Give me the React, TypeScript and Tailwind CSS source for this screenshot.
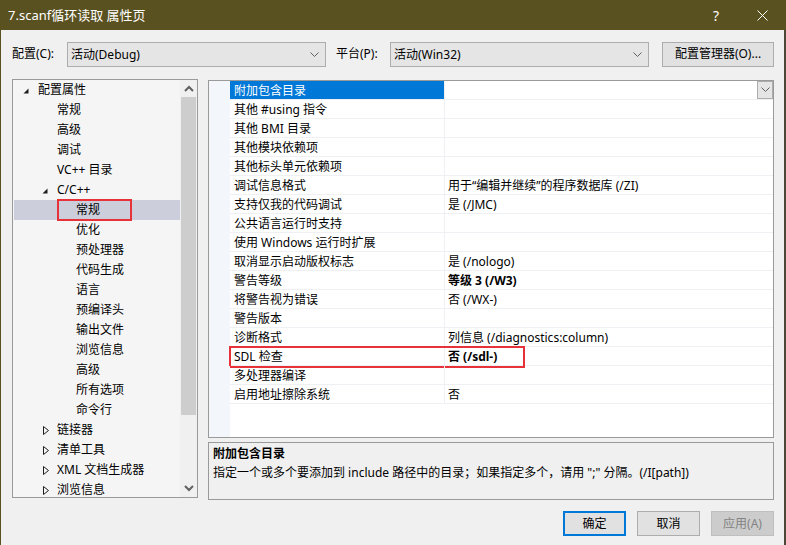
import React from "react";

const FONT = "font-['Noto_Sans','Noto_Sans_CJK_SC',sans-serif]";

function Chevron({ up = false }: { up?: boolean }) {
  return (
    <svg width="9" height="6" viewBox="0 0 9 6">
      <path
        d={up ? "M0.5 5.5 L4.5 1.5 L8.5 5.5" : "M0.5 0.5 L4.5 4.5 L8.5 0.5"}
        fill="none"
        stroke="#606060"
        strokeWidth="1"
      />
    </svg>
  );
}

function ScrollChevron({ up = false }: { up?: boolean }) {
  return (
    <svg width="10" height="7" viewBox="0 0 10 7">
      <path
        d={up ? "M1 6 L5 2 L9 6" : "M1 1 L5 5 L9 1"}
        fill="none"
        stroke="#606060"
        strokeWidth="2"
      />
    </svg>
  );
}

function Expanded() {
  return (
    <svg width="6" height="6" viewBox="0 0 6 6">
      <path d="M5.5 0.5 L5.5 5.5 L0.5 5.5 Z" fill="#1e1e1e" />
    </svg>
  );
}

function Collapsed() {
  return (
    <svg width="6" height="9" viewBox="0 0 6 9">
      <path d="M0.5 0.5 L5.5 4.5 L0.5 8.5 Z" fill="none" stroke="#1e1e1e" strokeWidth="1" />
    </svg>
  );
}

type TreeItem = { text: string; level: 0 | 1 | 2; arrow?: "open" | "closed"; selected?: boolean };

const tree: TreeItem[] = [
  { text: "配置属性", level: 0, arrow: "open" },
  { text: "常规", level: 1 },
  { text: "高级", level: 1 },
  { text: "调试", level: 1 },
  { text: "VC++ 目录", level: 1 },
  { text: "C/C++", level: 1, arrow: "open" },
  { text: "常规", level: 2, selected: true },
  { text: "优化", level: 2 },
  { text: "预处理器", level: 2 },
  { text: "代码生成", level: 2 },
  { text: "语言", level: 2 },
  { text: "预编译头", level: 2 },
  { text: "输出文件", level: 2 },
  { text: "浏览信息", level: 2 },
  { text: "高级", level: 2 },
  { text: "所有选项", level: 2 },
  { text: "命令行", level: 2 },
  { text: "链接器", level: 1, arrow: "closed" },
  { text: "清单工具", level: 1, arrow: "closed" },
  { text: "XML 文档生成器", level: 1, arrow: "closed" },
  { text: "浏览信息", level: 1, arrow: "closed" },
];

const props: { name: string; value: string; bold?: boolean }[] = [
  { name: "附加包含目录", value: "" },
  { name: "其他 #using 指令", value: "" },
  { name: "其他 BMI 目录", value: "" },
  { name: "其他模块依赖项", value: "" },
  { name: "其他标头单元依赖项", value: "" },
  { name: "调试信息格式", value: "用于“编辑并继续”的程序数据库 (/ZI)" },
  { name: "支持仅我的代码调试", value: "是 (/JMC)" },
  { name: "公共语言运行时支持", value: "" },
  { name: "使用 Windows 运行时扩展", value: "" },
  { name: "取消显示启动版权标志", value: "是 (/nologo)" },
  { name: "警告等级", value: "等级 3 (/W3)", bold: true },
  { name: "将警告视为错误", value: "否 (/WX-)" },
  { name: "警告版本", value: "" },
  { name: "诊断格式", value: "列信息 (/diagnostics:column)" },
  { name: "SDL 检查", value: "否 (/sdl-)", bold: true },
  { name: "多处理器编译", value: "" },
  { name: "启用地址擦除系统", value: "否" },
];

function TreeRow({ item }: { item: TreeItem }) {
  let pad = "pl-[8px]";
  if (item.level === 1) pad = item.arrow ? "pl-[27px]" : "pl-[43px]";
  if (item.level === 2) pad = "pl-[62px]";
  return (
    <div
      className={`relative h-[20px] flex items-center ${pad} ${item.selected ? "bg-[#cccedb]" : ""}`}
    >
      {(item.level === 0 || item.arrow) && (
        <div className="w-[16px] flex items-center">
          {item.arrow === "open" ? (
            <span className="ml-[1px] mt-[1px] flex">
              <Expanded />
            </span>
          ) : (
            <span className="ml-[2px] flex">
              <Collapsed />
            </span>
          )}
        </div>
      )}
      <span className="whitespace-nowrap leading-[20px]">{item.text}</span>
      {item.selected && (
        <div className="absolute left-[43px] top-[-1px] w-[75px] h-[22px] border-2 border-[#e8323a]" />
      )}
    </div>
  );
}

export default function App() {
  return (
    <div className={`w-[786px] h-[545px] bg-[#f0f0f0] text-[12px] text-black ${FONT} flex flex-col overflow-hidden`}>
      {/* Title bar */}
      <div className="h-[30px] bg-[#5a5121] flex items-center text-white shrink-0">
        <span className="pl-[8px] text-[13px] leading-[30px]">7.scanf循环读取 属性页</span>
        <div className="ml-auto w-[46px] h-[30px] flex items-center justify-center text-[14px]">?</div>
        <div className="w-[46px] h-[30px] flex items-center justify-center mr-[1px]">
          <svg width="11" height="11" viewBox="0 0 11 11">
            <path d="M0.5 0.5 L10.5 10.5 M10.5 0.5 L0.5 10.5" stroke="#ffffff" strokeWidth="1" />
          </svg>
        </div>
      </div>

      {/* Body */}
      <div className="flex-1 flex flex-col border-l border-l-[#5a5121] border-r-2 border-r-[#4b4636] pl-[11px] pr-[10px]">
        {/* Config row */}
        <div className="mt-[11px] h-[26px] flex items-center">
          <span className="w-[55px] whitespace-nowrap">配置(C):</span>
          <div className="w-[259px] h-[25px] mt-[1px] bg-[#e5e5e5] border border-[#adadad] flex items-center pl-[3px] pr-[6px]">
            <span>活动(Debug)</span>
            <span className="ml-auto flex">
              <Chevron />
            </span>
          </div>
          <span className="ml-[10px] w-[54px] whitespace-nowrap">平台(P):</span>
          <div className="w-[259px] h-[25px] mt-[1px] bg-[#e5e5e5] border border-[#adadad] flex items-center pl-[3px] pr-[6px]">
            <span>活动(Win32)</span>
            <span className="ml-auto flex">
              <Chevron />
            </span>
          </div>
          <div className="ml-[13px] w-[112px] h-[25px] bg-[#e1e1e1] border border-[#adadad] flex items-center justify-center">
            配置管理器(O)...
          </div>
        </div>

        {/* Main */}
        <div className="mt-[12px] flex">
          {/* Tree */}
          <div className="w-[186px] h-[419px] border border-[#9a9a9a] bg-[#f5f5f5] flex">
            <div className="w-[167px] pl-px overflow-hidden">
              {tree.map((t, i) => (
                <TreeRow key={i} item={t} />
              ))}
            </div>
            <div className="w-[17px] bg-[#f0f0f0] flex flex-col items-center">
              <div className="h-[17px] flex items-center justify-center">
                <ScrollChevron up />
              </div>
              <div className="w-[15px] h-[318px] bg-[#cdcdcd]" />
              <div className="flex-1" />
              <div className="h-[17px] flex items-center justify-center">
                <ScrollChevron />
              </div>
            </div>
          </div>

          {/* Right column */}
          <div className="ml-[10px] w-[566px] flex flex-col">
            <div className="mt-px h-[358px] border border-[#9a9a9a] bg-white flex flex-col">
              {props.map((p, i) => (
                <div key={i} className="relative h-[19px] flex">
                  <div className="w-[21px] bg-[#f3f6fb]" />
                  <div
                    className={`w-[215px] border-r border-b border-[#eef0f4] pl-[4px] leading-[20px] whitespace-nowrap ${
                      i === 0 ? "bg-[#0078d7] text-white" : ""
                    }`}
                  >
                    {p.name}
                  </div>
                  <div className="flex-1 flex border-b border-[#eef0f4] pl-[3px] leading-[20px] whitespace-nowrap">
                    <span className={p.bold ? "font-bold" : ""}>{p.value}</span>
                    {i === 0 && (
                      <div className="ml-auto w-[16px] h-[18px] bg-[#e5e5e5] border border-[#adadad] flex items-center justify-center">
                        <Chevron />
                      </div>
                    )}
                  </div>
                  {p.name === "SDL 检查" && (
                    <div className="absolute left-[20px] top-[-1px] w-[296px] h-[22px] border-2 border-[#e8323a]" />
                  )}
                </div>
              ))}
              <div className="flex-1 flex">
                <div className="w-[21px] bg-[#f3f6fb]" />
              </div>
            </div>

            <div className="mt-[4px] h-[58px] border border-[#9a9a9a] bg-[#f0f0f0] pl-[4px] pt-px leading-[19px]">
              <div className="font-bold">附加包含目录</div>
              <div className="whitespace-nowrap">
                指定一个或多个要添加到 include 路径中的目录；如果指定多个，请用 ";" 分隔。(/I[path])
              </div>
            </div>
          </div>
        </div>

        {/* Buttons */}
        <div className="mt-[11px] flex justify-end gap-[11px]">
          <div className="w-[63px] h-[25px] bg-[#e1e1e1] border-2 border-[#0078d7] flex items-center justify-center">
            确定
          </div>
          <div className="w-[63px] h-[25px] bg-[#e1e1e1] border border-[#adadad] flex items-center justify-center">
            取消
          </div>
          <div className="w-[63px] h-[25px] bg-[#cccccc] border border-[#bfbfbf] text-[#838383] flex items-center justify-center">
            应用(A)
          </div>
        </div>
      </div>
    </div>
  );
}
